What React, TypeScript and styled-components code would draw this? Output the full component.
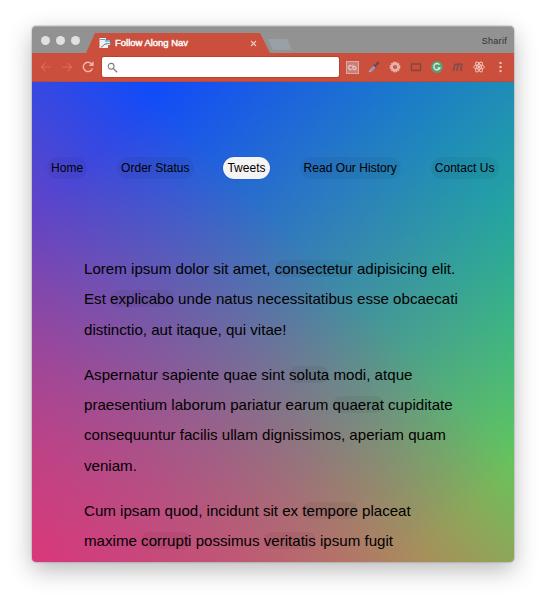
import React from "react";
import styled, { createGlobalStyle } from "styled-components";

const Global = createGlobalStyle`
  * { box-sizing: border-box; }
  body { margin: 0; background: #fff; font-family: "Liberation Sans", Arial, sans-serif; }
`;

const Desktop = styled.div`
  height: 600px;
  padding: 26px 32px 38px;
  overflow: hidden;
`;

const Window = styled.div`
  width: 482px;
  height: 536px;
  display: flex;
  flex-direction: column;
  border-radius: 4px;
  box-shadow: 0 0 1px 1px rgba(0, 0, 0, 0.12), 0 8px 24px rgba(0, 0, 0, 0.28);
`;

const TitleBar = styled.header`
  height: 27px;
  flex: none;
  display: flex;
  background: #929292;
  border-top: 1px solid #a6a8a5;
  border-radius: 4px 4px 0 0;
`;

const Lights = styled.div`
  display: flex;
  gap: 6px;
  padding: 9px 0 0 9px;
  width: 54px;
`;

const Light = styled.span`
  width: 9px;
  height: 9px;
  border-radius: 50%;
  background: #e0e0e0;
`;

const Tab = styled.div`
  width: 184px;
  height: 20px;
  margin-top: 6px;
  padding: 0 13px 0 13px;
  display: flex;
  align-items: center;
  background: #cb4f3d;
  clip-path: polygon(9px 0, 174px 0, 100% 100%, 0 100%);
`;

const TabTitle = styled.span`
  flex: 1;
  margin-left: 4px;
  color: #fff;
  font-size: 9.5px;
  line-height: 12px;
  letter-spacing: -0.02px;
  white-space: nowrap;
  -webkit-text-stroke: 0.4px #fff;
`;

const NewTab = styled.span`
  width: 24px;
  height: 11px;
  margin: 12px 0 0 -2px;
  background: #98a1a8;
  clip-path: polygon(0 0, 19px 0, 100% 100%, 5px 100%);
`;

const Profile = styled.span`
  margin: 8px 7px 0 auto;
  color: #303030;
  font-size: 9px;
  line-height: 12px;
  letter-spacing: 0.3px;
`;

const Toolbar = styled.div`
  height: 29px;
  flex: none;
  display: flex;
  align-items: center;
  background: #cb4f3d;
  border-bottom: 1px solid #b84a3c;
`;

const Controls = styled.div`
  width: 70px;
  padding-left: 7px;
  display: flex;
  gap: 7px;
`;

const Address = styled.div`
  width: 237px;
  height: 20px;
  padding-left: 5px;
  display: flex;
  align-items: center;
  background: #fff;
  border-radius: 2px;
  box-shadow: 0 0 0 1px #bd412d;
`;

const Extensions = styled.div`
  flex: 1;
  display: flex;
  align-items: center;
  justify-content: space-between;
  padding: 0 8px 0 7px;
`;

const Page = styled.main`
  flex: 1;
  overflow: hidden;
  border-radius: 0 0 4px 4px;
  background:
    linear-gradient(45deg, rgba(217, 56, 122, 1) 0%, rgba(217, 56, 122, 0) 61%),
    linear-gradient(135deg, rgba(18, 76, 248, 1) 14%, rgba(18, 76, 248, 0) 90%),
    linear-gradient(225deg, rgba(46, 213, 112, 1) 14%, rgba(46, 213, 112, 0) 100%),
    rgb(232, 160, 42);
`;

const Menu = styled.nav`
  display: flex;
  justify-content: space-between;
  padding: 75px 15.5px 0 15px;
`;

const MenuLink = styled.a<{ $active?: boolean }>`
  height: 22px;
  padding: 0 4px;
  border-radius: 11px;
  font-size: 12px;
  letter-spacing: 0.04px;
  line-height: 22px;
  white-space: nowrap;
  color: #000;
  background: ${(p) => (p.$active ? "#f4f4f4" : "rgba(0, 0, 0, 0.05)")};
  box-shadow: ${(p) => (p.$active ? "0 0 1px rgba(0, 20, 90, 0.5)" : "none")};
`;

const Article = styled.article`
  padding: 75px 0 0 52px;
`;

const Paragraph = styled.p`
  margin: 0 0 15px;
  font-size: 15.12px;
  line-height: 30.3px;
  white-space: nowrap;
  color: #000;
`;

const Word = styled.a`
  border-radius: 9px;
  background: rgba(0, 0, 0, 0.05);
`;

const Icon = ({ size = 12, children }: { size?: number; children: React.ReactNode }) => (
  <svg width={size} height={size} viewBox="0 0 12 12" fill="none">{children}</svg>
);

export default function App() {
  return (
    <>
      <Global />
      <Desktop>
        <Window>
          <TitleBar>
            <Lights><Light /><Light /><Light /></Lights>
            <Tab>
              <Icon>
                <path d="M.5 1H7v2h4v8H.5z" fill="#eef2f3" />
                <path d="M1 2.500h5.500M7 6.500h5" stroke="#4aa9dd" strokeWidth="1.200" />
                <path d="M6 4h6" stroke="#2b78ad" strokeWidth="1.200" />
                <path d="M2 10.500l4-3.500h2" stroke="#81766c" />
                <path d="M9 8h3v4H9z" fill="#cb4f3d" />
              </Icon>
              <TabTitle>Follow Along Nav</TabTitle>
              <svg width="7" height="7" viewBox="0 0 7 7"><path d="M1 1l5 5M6 1L1 6" stroke="#f2c9c3" strokeWidth="1.2" /></svg>
            </Tab>
            <NewTab />
            <Profile>Sharif</Profile>
          </TitleBar>
          <Toolbar>
            <Controls>
              <Icon size={14}><path d="M10 6H2M5.500 2.500L2 6l3.500 3.500" stroke="#de6d5d" strokeWidth=".9" /></Icon>
              <Icon size={14}><path d="M2 6h8M6.500 2.500L10 6 6.500 9.500" stroke="#de6d5d" strokeWidth=".9" /></Icon>
              <Icon size={14}><path d="M9.800 7.200A4 4 0 1 1 8.900 3.200L10 4.300M10.200 1.500v3H7.200" stroke="#f2b8af" strokeWidth="1.2" /></Icon>
            </Controls>
            <Address>
              <Icon size={11}><circle cx="4.500" cy="4.700" r="3.200" stroke="#787878" strokeWidth="1.1" /><path d="M7 7.200l4 4" stroke="#787878" strokeWidth="1.400" /></Icon>
            </Address>
            <Extensions>
              <svg width="13" height="13" viewBox="0 0 14 14" fill="none">
                <rect x=".5" y=".5" width="13" height="13" fill="#c5827a" stroke="#e8aaa2" />
                <path d="M6 5.300C4.700 4 2.800 5 2.800 7s1.900 3 3.200 1.700M7.500 4v5M7.500 7c1-1.800 3.400-1 3.400.6S8.500 10 7.500 8.500" stroke="#edc0b9" strokeWidth="1.400" />
              </svg>
              <Icon>
                <path d="M1 11l.8-2L6 5l1.400 1.400-4 4z" fill="#8c91b8" stroke="#c5bcd0" strokeWidth=".5" />
                <path d="M5 4l1-1 1 1 2-3c1-1 3 0 2 2L8 5l1 1-1 1z" fill="#69484d" />
              </Icon>
              <Icon>
                <circle cx="6" cy="6" r="4.500" stroke="#e9b1a8" strokeWidth="1.800" strokeDasharray="1.700 .65" />
                <circle cx="6" cy="6" r="3.200" stroke="#e9b1a8" strokeWidth="2.400" />
                <circle cx="6" cy="6" r="1.500" fill="#ba6559" />
              </Icon>
              <Icon>
                <path d="M1.500 3h9v6.500h-9z" stroke="#87463b" strokeWidth="1.300" />
                <path d="M.5 2.500v-1h1M10.500 1.500h1v1M.5 10v1h1M10.500 11h1v-1" stroke="#7a773e" />
              </Icon>
              <Icon>
                <circle cx="6" cy="6" r="5.900" fill="#55a171" />
                <path d="M8.500 3.700A3.200 3.200 0 1 0 9 6.800H6.500" stroke="#e2eee5" strokeWidth="1.300" />
              </Icon>
              <Icon>
                <path d="M3.100 2.500L1.300 10M2.900 4.500C4.200 2.600 6.500 2.500 6 4.400L4.700 10M6 4.400C7.500 2.500 10.300 2.400 9.800 4.400L8.800 8.500Q8.600 9.700 10.500 9.200" stroke="#804f47" strokeWidth="1.700" />
              </Icon>
              <Icon>
                <g stroke="#f3c3bb" strokeWidth=".9">
                  <ellipse cx="6" cy="6" rx="5.500" ry="2.100" />
                  <ellipse cx="6" cy="6" rx="5.500" ry="2.100" transform="rotate(60 6 6)" />
                  <ellipse cx="6" cy="6" rx="5.500" ry="2.100" transform="rotate(120 6 6)" />
                </g>
                <circle cx="6" cy="6" r="1.200" fill="#f3c3bb" />
              </Icon>
              <svg width="12" height="12" viewBox="0 0 12 12" fill="#f0c4bd"><circle cx="6.500" cy="1.900" r="1.200" /><circle cx="6.500" cy="6" r="1.200" /><circle cx="6.500" cy="10.100" r="1.200" /></svg>
            </Extensions>
          </Toolbar>
          <Page>
            <Menu>
              <MenuLink>Home</MenuLink>
              <MenuLink>Order Status</MenuLink>
              <MenuLink $active>Tweets</MenuLink>
              <MenuLink>Read Our History</MenuLink>
              <MenuLink>Contact Us</MenuLink>
            </Menu>
            <Article>
              <Paragraph>
                Lorem ipsum dolor sit amet, <Word>consectetur</Word> adipisicing elit.<br />
                Est <Word>explicabo</Word> unde natus necessitatibus esse obcaecati<br />
                distinctio, aut itaque, qui vitae!
              </Paragraph>
              <Paragraph>
                Aspernatur sapiente quae sint <Word>soluta</Word> modi, atque<br />
                praesentium laborum pariatur earum <Word>quaerat</Word> cupiditate<br />
                consequuntur facilis ullam dignissimos, aperiam quam<br />
                veniam.
              </Paragraph>
              <Paragraph>
                Cum ipsam quod, incidunt sit ex <Word>tempore</Word> placeat<br />
                maxime <Word>corrupti</Word> possimus <Word>veritatis</Word> ipsum fugit
              </Paragraph>
            </Article>
          </Page>
        </Window>
      </Desktop>
    </>
  );
}
